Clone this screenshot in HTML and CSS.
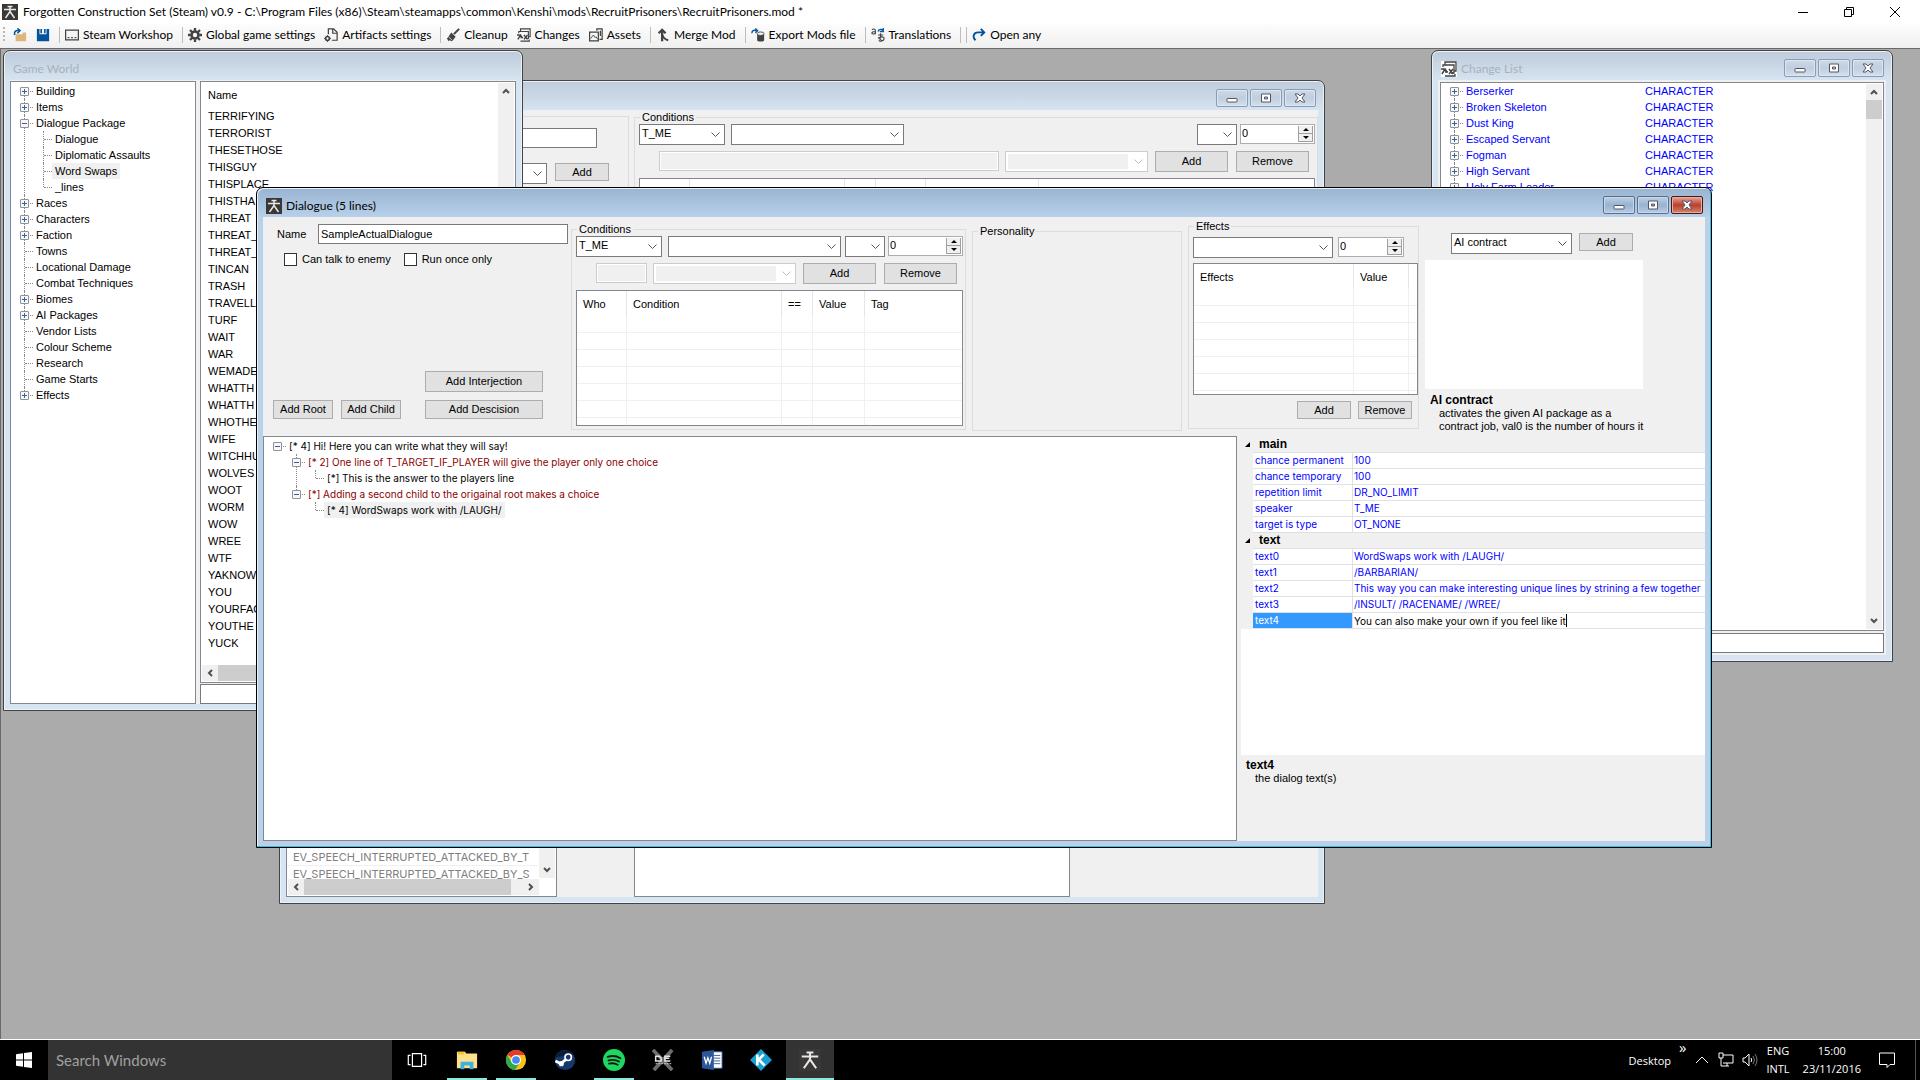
FILE: index.html
```html
<!DOCTYPE html>
<html lang="en">

<head>
    <meta charset="UTF-8">
    <meta name="viewport" content="width=device-width, initial-scale=1.0">
    <title>Forgotten Construction Set</title>
    <link rel="stylesheet" href="styles.css">
</head>

<body>

    <!-- Shared icons -->
    <svg class="defs" aria-hidden="true">
        <symbol id="i-app" viewBox="0 0 16 16">
            <rect width="16" height="16" fill="#3a3836" />
            <path d="M2 5.5h12M5.5 2.6h5M8 2v6M8 7.5L3.5 14M8 7.5l4.5 6.5" stroke="#e8e8e8" stroke-width="1.5" fill="none" />
        </symbol>
        <symbol id="i-open" viewBox="0 0 16 16">
            <path d="M3 7v8h12V5h-4v2z" fill="#dcb67a" />
            <path d="M2 8C1 4 3 2.500 7 3M5 .5L8 3 5 6" stroke="#00539c" stroke-width="1.800" fill="none" />
        </symbol>
        <symbol id="i-save" viewBox="0 0 16 16">
            <path d="M1 1h3v6h8V1h3v14H1z" fill="#00539c" />
            <path d="M5 1h6v5H9V2H7v4H5z" fill="#00539c" />
            <rect x="7" y="1" width="2" height="4" fill="#fff" />
        </symbol>
        <symbol id="i-shop" viewBox="0 0 16 16">
            <path d="M.7 2.500h14.600v11H.7z" stroke="#424242" stroke-width="1.400" fill="#f5f5f5" />
            <path d="M3 11h2M7 11h2M11 11h2" stroke="#424242" stroke-width="1.500" />
        </symbol>
        <symbol id="i-gear" viewBox="0 0 16 16">
            <circle cx="8" cy="8" r="4" stroke="#424242" stroke-width="3" fill="none" />
            <path d="M8 0v3M8 13v3M0 8h3M13 8h3M2.300 2.300l2.200 2.200M11.500 11.500l2.200 2.200M13.700 2.300l-2.200 2.200M4.500 11.500l-2.200 2.200" stroke="#424242" stroke-width="2.600" />
        </symbol>
        <symbol id="i-art" viewBox="0 0 16 16">
            <path d="M5 7V1h6l4 4v9H9M10 1v5h5" stroke="#424242" stroke-width="1.400" fill="none" />
            <circle cx="4" cy="12" r="2.200" stroke="#424242" stroke-width="1.800" fill="none" />
            <path d="M4 8v8M0 12h8" stroke="#424242" stroke-dasharray="1.500 5" />
        </symbol>
        <symbol id="i-broom" viewBox="0 0 16 16">
            <path d="M15 1l-6 6" stroke="#424242" stroke-width="2.400" />
            <path d="M6 5l5 5-4 5-3-1-1 1-2-3 1-1z" fill="#424242" />
            <path d="M3 10l4 4" stroke="#fff" stroke-width=".8" />
        </symbol>
        <symbol id="i-changes" viewBox="0 0 16 16">
            <path d="M4 4V1h11v9h-2M2 6V4h11v8h-3M4 15h10v-2" stroke="#424242" stroke-width="1.300" fill="none" />
            <path d="M1 13l3-5 2 3M4 11h3M8 8l4 5M12 8l-4 5M0 8h3" stroke="#424242" stroke-width="1.500" fill="none" />
        </symbol>
        <symbol id="i-assets" viewBox="0 0 16 16">
            <path d="M.7 4.700h10v10h-10zM9 3V1h6v12h-3M13 3v6" stroke="#424242" stroke-width="1.400" fill="none" />
            <path d="M2 12l3-4 2 3 1-1 2 3" stroke="#424242" fill="none" />
        </symbol>
        <symbol id="i-merge" viewBox="0 0 16 16">
            <path d="M7 15V3M3 6l4-4 4 4" stroke="#424242" stroke-width="2.600" fill="none" />
            <path d="M7 7c1 4 3 6 7 7" stroke="#424242" stroke-width="2.200" fill="none" />
        </symbol>
        <symbol id="i-export" viewBox="0 0 16 16">
            <path d="M1 6c0-3 2-4 5-3M5 .5L7.500 3 5 5.500" stroke="#00539c" stroke-width="1.600" fill="none" />
            <path d="M7 7v7c0 2 8 2 8 0V7z" fill="#424242" />
            <ellipse cx="11" cy="6.500" rx="4" ry="2" fill="#f5f5f5" stroke="#424242" />
        </symbol>
        <symbol id="i-trans" viewBox="0 0 16 16">
            <path d="M1 2c2-1.500 4-1 4 1v4M5 4C2 4 1 5 1 6s3 1.500 4-.5M8 8h6M11 6v6M9 12c0-2 6-3 6 0s-5 4-6 2M8 11l5 4" stroke="#424242" stroke-width="1.300" fill="none" />
            <path d="M8 4c1-3 4-3 6-1M14 0v4h-4" stroke="#00539c" stroke-width="1.500" fill="none" />
        </symbol>
        <symbol id="i-any" viewBox="0 0 16 16">
            <path d="M4 14C0 10 2 5 7 5h7M10 1l4 4-4 4" stroke="#00539c" stroke-width="2.200" fill="none" />
        </symbol>
        <symbol id="i-min" viewBox="0 0 12 12">
            <rect x="1" y="6.500" width="10" height="3.500" rx=".5" fill="#fff" stroke="#535666" />
        </symbol>
        <symbol id="i-max" viewBox="0 0 12 12">
            <path d="M1.500 2h9v8h-9zM4.500 5h3v2h-3z" fill="#fff" stroke="#535666" fill-rule="evenodd" />
        </symbol>
        <symbol id="i-close" viewBox="0 0 12 12">
            <path d="M1 2h3l2 2 2-2h3L8 6l3 4H8L6 8l-2 2H1l3-4z" fill="#fff" stroke="#535666" />
        </symbol>
        <symbol id="i-up" viewBox="0 0 16 16"><path d="M5 10l3-3 3 3" stroke="#505050" stroke-width="2" fill="none" /></symbol>
        <symbol id="i-down" viewBox="0 0 16 16"><path d="M5 6l3 3 3-3" stroke="#505050" stroke-width="2" fill="none" /></symbol>
        <symbol id="i-left" viewBox="0 0 16 16"><path d="M10 5L7 8l3 3" stroke="#505050" stroke-width="2" fill="none" /></symbol>
        <symbol id="i-right" viewBox="0 0 16 16"><path d="M6 5l3 3-3 3" stroke="#505050" stroke-width="2" fill="none" /></symbol>
    </svg>

    <!-- Application title bar -->
    <header class="app-title">
        <svg class="icon16"><use href="#i-app" /></svg>
        <h1>Forgotten Construction Set (Steam) v0.9 - C:\Program Files (x86)\Steam\steamapps\common\Kenshi\mods\RecruitPrisoners\RecruitPrisoners.mod *</h1>
        <div class="app-buttons">
            <button aria-label="Minimize"><svg viewBox="0 0 10 10"><path d="M0 5.500h10" /></svg></button>
            <button aria-label="Restore"><svg viewBox="0 0 10 10"><path d="M.5 2.500h7v7h-7zM2.500 2.500v-2h7v7h-2" /></svg></button>
            <button aria-label="Close"><svg viewBox="0 0 10 10"><path d="M0 0l10 10M10 0L0 10" /></svg></button>
        </div>
    </header>

    <nav class="toolbar">
        <span class="grip"></span>
        <button aria-label="Open"><svg><use href="#i-open" /></svg></button>
        <button aria-label="Save"><svg><use href="#i-save" /></svg></button>
        <span class="sep"></span>
        <button><svg><use href="#i-shop" /></svg>Steam Workshop</button>
        <span class="sep"></span>
        <button><svg><use href="#i-gear" /></svg>Global game settings</button>
        <button><svg><use href="#i-art" /></svg>Artifacts settings</button>
        <span class="sep"></span>
        <button><svg><use href="#i-broom" /></svg>Cleanup</button>
        <button><svg><use href="#i-changes" /></svg>Changes</button>
        <button><svg><use href="#i-assets" /></svg>Assets</button>
        <span class="sep"></span>
        <button><svg><use href="#i-merge" /></svg>Merge Mod</button>
        <span class="sep"></span>
        <button><svg><use href="#i-export" /></svg>Export Mods file</button>
        <span class="sep"></span>
        <button><svg><use href="#i-trans" /></svg>Translations</button>
        <span class="sep"></span>
        <span class="sep"></span>
        <button><svg><use href="#i-any" /></svg>Open any</button>
    </nav>

    <main class="mdi">

        <!-- Dialogue package window, behind the others -->
        <section class="window win-package">
            <div class="win-title">
                <div class="win-buttons">
                    <button aria-label="Minimize"><svg><use href="#i-min" /></svg></button>
                    <button aria-label="Maximize"><svg><use href="#i-max" /></svg></button>
                    <button aria-label="Close"><svg><use href="#i-close" /></svg></button>
                </div>
            </div>
            <div class="win-body package-body">
                <div class="package-top">
                    <fieldset class="package-event">
                        <div class="row"><input type="text" class="package-name" aria-label="Package name"></div>
                        <div class="row event-row">
                            <select class="grow" aria-label="Event"><option></option></select>
                            <button class="btn btn-short">Add</button>
                        </div>
                    </fieldset>
                    <fieldset class="grow">
                        <legend>Conditions</legend>
                        <div class="row">
                            <select class="w-who" aria-label="Who"><option>T_ME</option></select>
                            <select class="w-cond" aria-label="Condition"><option></option></select>
                            <select class="w-op push" aria-label="Comparison"><option></option></select>
                            <span class="spin"><input type="text" value="0" aria-label="Value"><span><button aria-label="Up"></button><button aria-label="Down"></button></span></span>
                        </div>
                        <div class="row row-tag">
                            <input type="text" class="grow" disabled aria-label="Tag value">
                            <select class="w-tag" disabled aria-label="Tag"><option></option></select>
                            <button class="btn btn-wide">Add</button>
                            <button class="btn btn-wide">Remove</button>
                        </div>
                        <div class="listbox package-list"><i></i><i></i><i></i><i></i><i></i></div>
                    </fieldset>
                </div>
                <div class="package-bottom">
                    <div class="listbox events">
                        <div class="events-main">
                            <ul>
                                <li>EV_SPEECH_INTERRUPTED_ATTACKED_BY_T</li>
                                <li>EV_SPEECH_INTERRUPTED_ATTACKED_BY_S</li>
                            </ul>
                            <div class="vscroll"><svg class="end"><use href="#i-down" /></svg></div>
                        </div>
                        <div class="hscroll"><svg><use href="#i-left" /></svg><span class="thumb"></span><svg><use href="#i-right" /></svg></div>
                    </div>
                    <div class="listbox package-lines"></div>
                </div>
            </div>
        </section>

        <!-- Change list -->
        <section class="window win-changes">
            <div class="win-title">
                <svg class="icon16"><use href="#i-changes" /></svg>
                <h2>Change List</h2>
                <div class="win-buttons">
                    <button aria-label="Minimize"><svg><use href="#i-min" /></svg></button>
                    <button aria-label="Maximize"><svg><use href="#i-max" /></svg></button>
                    <button aria-label="Close"><svg><use href="#i-close" /></svg></button>
                </div>
            </div>
            <div class="win-body changes-body">
                <div class="listbox changes-list">
                    <ul class="tree">
                        <li><div class="node"><button class="box plus" aria-label="Expand"></button><span>Berserker</span><span>CHARACTER</span></div></li>
                        <li><div class="node"><button class="box plus" aria-label="Expand"></button><span>Broken Skeleton</span><span>CHARACTER</span></div></li>
                        <li><div class="node"><button class="box plus" aria-label="Expand"></button><span>Dust King</span><span>CHARACTER</span></div></li>
                        <li><div class="node"><button class="box plus" aria-label="Expand"></button><span>Escaped Servant</span><span>CHARACTER</span></div></li>
                        <li><div class="node"><button class="box plus" aria-label="Expand"></button><span>Fogman</span><span>CHARACTER</span></div></li>
                        <li><div class="node"><button class="box plus" aria-label="Expand"></button><span>High Servant</span><span>CHARACTER</span></div></li>
                        <li><div class="node"><button class="box plus" aria-label="Expand"></button><span>Holy Farm Leader</span><span>CHARACTER</span></div></li>
                    </ul>
                    <div class="vscroll"><svg><use href="#i-up" /></svg><span class="thumb"></span><svg class="end"><use href="#i-down" /></svg></div>
                </div>
                <input type="text" aria-label="Filter changes">
            </div>
        </section>

        <!-- Game world browser -->
        <section class="window win-world">
            <div class="win-title"><h2>Game World</h2></div>
            <div class="win-body world-body">
                <div class="listbox world-tree">
                    <ul class="tree">
                        <li><div class="node"><button class="box plus" aria-label="Expand"></button><span>Building</span></div></li>
                        <li><div class="node"><button class="box plus" aria-label="Expand"></button><span>Items</span></div></li>
                        <li>
                            <div class="node"><button class="box" aria-label="Collapse"></button><span>Dialogue Package</span></div>
                            <ul>
                                <li><div class="node"><span>Dialogue</span></div></li>
                                <li><div class="node"><span>Diplomatic Assaults</span></div></li>
                                <li><div class="node"><span class="selected">Word Swaps</span></div></li>
                                <li><div class="node"><span>_lines</span></div></li>
                            </ul>
                        </li>
                        <li><div class="node"><button class="box plus" aria-label="Expand"></button><span>Races</span></div></li>
                        <li><div class="node"><button class="box plus" aria-label="Expand"></button><span>Characters</span></div></li>
                        <li><div class="node"><button class="box plus" aria-label="Expand"></button><span>Faction</span></div></li>
                        <li><div class="node"><span>Towns</span></div></li>
                        <li><div class="node"><span>Locational Damage</span></div></li>
                        <li><div class="node"><span>Combat Techniques</span></div></li>
                        <li><div class="node"><button class="box plus" aria-label="Expand"></button><span>Biomes</span></div></li>
                        <li><div class="node"><button class="box plus" aria-label="Expand"></button><span>AI Packages</span></div></li>
                        <li><div class="node"><span>Vendor Lists</span></div></li>
                        <li><div class="node"><span>Colour Scheme</span></div></li>
                        <li><div class="node"><span>Research</span></div></li>
                        <li><div class="node"><span>Game Starts</span></div></li>
                        <li><div class="node"><button class="box plus" aria-label="Expand"></button><span>Effects</span></div></li>
                    </ul>
                </div>
                <div class="world-items">
                    <div class="listbox world-list">
                        <div class="world-scroll">
                            <table>
                                <thead><tr><th>Name</th></tr></thead>
                                <tbody>
                                    <tr><td>TERRIFYING</td></tr>
                                    <tr><td>TERRORIST</td></tr>
                                    <tr><td>THESETHOSE</td></tr>
                                    <tr><td>THISGUY</td></tr>
                                    <tr><td>THISPLACE</td></tr>
                                    <tr><td>THISTHA</td></tr>
                                    <tr><td>THREAT</td></tr>
                                    <tr><td>THREAT_</td></tr>
                                    <tr><td>THREAT_</td></tr>
                                    <tr><td>TINCAN</td></tr>
                                    <tr><td>TRASH</td></tr>
                                    <tr><td>TRAVELL</td></tr>
                                    <tr><td>TURF</td></tr>
                                    <tr><td>WAIT</td></tr>
                                    <tr><td>WAR</td></tr>
                                    <tr><td>WEMADE</td></tr>
                                    <tr><td>WHATTH</td></tr>
                                    <tr><td>WHATTH</td></tr>
                                    <tr><td>WHOTHE</td></tr>
                                    <tr><td>WIFE</td></tr>
                                    <tr><td>WITCHHU</td></tr>
                                    <tr><td>WOLVES</td></tr>
                                    <tr><td>WOOT</td></tr>
                                    <tr><td>WORM</td></tr>
                                    <tr><td>WOW</td></tr>
                                    <tr><td>WREE</td></tr>
                                    <tr><td>WTF</td></tr>
                                    <tr><td>YAKNOW</td></tr>
                                    <tr><td>YOU</td></tr>
                                    <tr><td>YOURFAC</td></tr>
                                    <tr><td>YOUTHE</td></tr>
                                    <tr><td>YUCK</td></tr>
                                </tbody>
                            </table>
                            <div class="vscroll"><svg><use href="#i-up" /></svg></div>
                        </div>
                        <div class="hscroll"><svg><use href="#i-left" /></svg><span class="thumb"></span></div>
                    </div>
                    <input type="text" aria-label="Filter items">
                </div>
            </div>
        </section>

        <!-- Active dialogue editor -->
        <section class="window active win-dialogue">
            <div class="win-title">
                <svg class="icon16"><use href="#i-app" /></svg>
                <h2>Dialogue (5 lines)</h2>
                <div class="win-buttons">
                    <button aria-label="Minimize"><svg><use href="#i-min" /></svg></button>
                    <button aria-label="Maximize"><svg><use href="#i-max" /></svg></button>
                    <button class="close" aria-label="Close"><svg><use href="#i-close" /></svg></button>
                </div>
            </div>
            <div class="win-body dialogue-body">
                <div class="dialogue-top">
                    <div class="general">
                        <div class="row name-row">
                            <label for="name">Name</label>
                            <input type="text" id="name" class="grow" value="SampleActualDialogue">
                        </div>
                        <div class="row checks">
                            <label><input type="checkbox">Can talk to enemy</label>
                            <label><input type="checkbox">Run once only</label>
                        </div>
                        <div class="line-buttons">
                            <div class="row"><button class="btn btn-line push">Add Interjection</button></div>
                            <div class="row">
                                <button class="btn btn-node">Add Root</button>
                                <button class="btn btn-node">Add Child</button>
                                <button class="btn btn-line push">Add Descision</button>
                            </div>
                        </div>
                    </div>

                    <fieldset class="conditions">
                        <legend>Conditions</legend>
                        <div class="row">
                            <select class="w-who" aria-label="Who"><option>T_ME</option></select>
                            <select class="w-cond" aria-label="Condition"><option></option></select>
                            <select class="w-op" aria-label="Comparison"><option></option></select>
                            <span class="spin"><input type="text" value="0" aria-label="Value"><span><button aria-label="Up"></button><button aria-label="Down"></button></span></span>
                        </div>
                        <div class="row row-tag">
                            <input type="text" class="grow" disabled aria-label="Tag value">
                            <select class="w-tag" disabled aria-label="Tag"><option></option></select>
                            <button class="btn btn-wide">Add</button>
                            <button class="btn btn-wide">Remove</button>
                        </div>
                        <div class="listbox grid-list">
                            <table>
                                <colgroup><col class="c-who"><col class="c-cond"><col class="c-eq"><col class="c-value"><col></colgroup>
                                <thead><tr><th>Who</th><th>Condition</th><th>==</th><th>Value</th><th>Tag</th></tr></thead>
                                <tbody>
                                    <tr><td></td><td></td><td></td><td></td><td></td></tr>
                                    <tr><td></td><td></td><td></td><td></td><td></td></tr>
                                    <tr><td></td><td></td><td></td><td></td><td></td></tr>
                                    <tr><td></td><td></td><td></td><td></td><td></td></tr>
                                    <tr><td></td><td></td><td></td><td></td><td></td></tr>
                                    <tr><td></td><td></td><td></td><td></td><td></td></tr>
                                    <tr><td></td><td></td><td></td><td></td><td></td></tr>
                                </tbody>
                            </table>
                        </div>
                    </fieldset>

                    <fieldset class="personality">
                        <legend>Personality</legend>
                    </fieldset>

                    <fieldset class="effects">
                        <legend>Effects</legend>
                        <div class="row effect-row">
                            <select class="w-effect" aria-label="Effect"><option></option></select>
                            <span class="spin grow"><input type="text" value="0" aria-label="Effect value"><span><button aria-label="Up"></button><button aria-label="Down"></button></span></span>
                        </div>
                        <div class="listbox grid-list">
                            <table>
                                <colgroup><col class="c-effect"><col class="c-evalue"><col></colgroup>
                                <thead><tr><th>Effects</th><th>Value</th><th></th></tr></thead>
                                <tbody>
                                    <tr><td></td><td></td><td></td></tr>
                                    <tr><td></td><td></td><td></td></tr>
                                    <tr><td></td><td></td><td></td></tr>
                                    <tr><td></td><td></td><td></td></tr>
                                    <tr><td></td><td></td><td></td></tr>
                                    <tr><td></td><td></td><td></td></tr>
                                    <tr><td></td><td></td><td></td></tr>
                                </tbody>
                            </table>
                        </div>
                        <div class="row effect-buttons">
                            <button class="btn btn-short">Add</button>
                            <button class="btn btn-short">Remove</button>
                        </div>
                    </fieldset>

                    <div class="ai">
                        <div class="row ai-row">
                            <select class="w-ai" aria-label="AI type"><option>AI contract</option></select>
                            <button class="btn btn-short">Add</button>
                        </div>
                        <div class="ai-list"></div>
                        <h3>AI contract</h3>
                        <p>activates the given AI package as a contract job, val0 is the number of hours it</p>
                    </div>
                </div>

                <div class="dialogue-bottom">
                    <div class="listbox lines">
                        <ul class="tree">
                            <li>
                                <div class="node"><button class="box" aria-label="Collapse"></button><span>[* 4] Hi! Here you can write what they will say!</span></div>
                                <ul>
                                    <li>
                                        <div class="node player"><button class="box" aria-label="Collapse"></button><span>[* 2] One line of T_TARGET_IF_PLAYER will give the player only one choice</span></div>
                                        <ul>
                                            <li><div class="node"><span>[*] This is the answer to the players line</span></div></li>
                                        </ul>
                                    </li>
                                    <li>
                                        <div class="node player"><button class="box" aria-label="Collapse"></button><span>[*] Adding a second child to the origainal root makes a choice</span></div>
                                        <ul>
                                            <li><div class="node"><span class="selected">[* 4] WordSwaps work with /LAUGH/</span></div></li>
                                        </ul>
                                    </li>
                                </ul>
                            </li>
                        </ul>
                    </div>

                    <div class="properties">
                        <div class="props-scroll">
                            <table>
                                <colgroup><col class="c-margin"><col class="c-prop"><col></colgroup>
                                <tr class="group"><td><b class="tri"></b></td><th colspan="2">main</th></tr>
                                <tr><td></td><th>chance permanent</th><td>100</td></tr>
                                <tr><td></td><th>chance temporary</th><td>100</td></tr>
                                <tr><td></td><th>repetition limit</th><td>DR_NO_LIMIT</td></tr>
                                <tr><td></td><th>speaker</th><td>T_ME</td></tr>
                                <tr><td></td><th>target is type</th><td>OT_NONE</td></tr>
                                <tr class="group"><td><b class="tri"></b></td><th colspan="2">text</th></tr>
                                <tr><td></td><th>text0</th><td>WordSwaps work with /LAUGH/</td></tr>
                                <tr><td></td><th>text1</th><td>/BARBARIAN/</td></tr>
                                <tr><td></td><th>text2</th><td>This way you can make interesting unique lines by strining a few together</td></tr>
                                <tr><td></td><th>text3</th><td>/INSULT/ /RACENAME/ /WREE/</td></tr>
                                <tr class="current"><td></td><th><label for="text4">text4</label></th><td><input type="text" id="text4" value="You can also make your own if you feel like it"><span class="caret"></span></td></tr>
                            </table>
                        </div>
                        <div class="help">
                            <h3>text4</h3>
                            <p>the dialog text(s)</p>
                        </div>
                    </div>
                </div>
            </div>
        </section>
    </main>

    <!-- Windows taskbar -->
    <footer class="taskbar">
        <button class="start" aria-label="Start">
            <svg viewBox="0 0 16 16"><path d="M0 2.300L7 1.200v6.300H0zM8 1l8-1v7.500H8zM0 8.500h7v6.300L0 13.700zM8 8.500h8V16l-8-1z" fill="#fff" /></svg>
        </button>
        <input type="text" class="search" placeholder="Search Windows" aria-label="Search Windows">
        <div class="apps">
            <button class="task-view" aria-label="Task view">
                <svg viewBox="0 0 24 24" fill="none" stroke="#fff" stroke-width="1.300"><path d="M7 5h10v14H7zM5 7H2.500v10H5M19 7h2.500v10H19" /></svg>
            </button>
            <button class="open" aria-label="File Explorer">
                <svg viewBox="0 0 24 24"><path d="M1 3h9l1 2h12v16H1z" fill="#ffe08a" /><path d="M2 3h7v3H2z" fill="#f5c32c" /><path d="M5 22v-8h14v8h-4v-4H9v4z" fill="#3cb1e6" /></svg>
            </button>
            <button class="open" aria-label="Chrome">
                <svg viewBox="0 0 24 24"><circle cx="12" cy="12" r="11" fill="#fbc116" /><path d="M12 12L2.500 6.500A11 11 0 0 1 21.500 6.500H12z" fill="#e33b2e" /><path d="M2.500 6.500A11 11 0 0 0 11 23l5-8-9-1z" fill="#2da94f" /><circle cx="12" cy="12" r="5.500" fill="#fff" /><circle cx="12" cy="12" r="4.200" fill="#4587f3" /></svg>
            </button>
            <button aria-label="Steam">
                <svg viewBox="0 0 24 24"><circle cx="12" cy="12" r="11" fill="#16386b" /><path d="M2 9a11 11 0 0 1 19-3z" fill="#0b1c3b" /><path d="M1.500 13l6 3 6-5" stroke="#fff" stroke-width="3" fill="none" /><circle cx="15.500" cy="9" r="3.500" fill="#16386b" stroke="#fff" stroke-width="1.800" /><circle cx="8" cy="16" r="2.800" fill="#fff" /></svg>
            </button>
            <button class="open" aria-label="Spotify">
                <svg viewBox="0 0 24 24"><circle cx="12" cy="12" r="12" fill="#1ed760" /><path d="M5 8.500c5-1.500 10-1 14 1.500M6 12.500c4-1 8-.8 11.500 1.200M6.500 16c3.500-.8 6.500-.6 9.500 1.200" stroke="#0a1a10" stroke-width="2" fill="none" stroke-linecap="round" /></svg>
            </button>
            <button aria-label="DC Universe">
                <svg viewBox="0 0 24 24" fill="none"><path d="M1 1l21 22M22 1L2 23" stroke="#6e6e6e" stroke-width="4" /><path d="M4 8h4l2 2v3H4zM20 8h-6v5h6M14 10h5" stroke="#e4e4e4" stroke-width="1.600" /><path d="M4 16h17" stroke="#cfcfcf" stroke-dasharray="2 1" /></svg>
            </button>
            <button aria-label="Word">
                <svg viewBox="0 0 24 24"><path d="M12 3h11v18H12z" fill="#fff" stroke="#2b579a" /><path d="M14 7h7M14 10h7M14 13h7M14 16h7" stroke="#2b579a" /><path d="M1 3l13-2v22L1 21z" fill="#2b579a" /><path d="M3.500 8.500l2 7 2-6 2 6 2-7" stroke="#fff" stroke-width="1.400" fill="none" /></svg>
            </button>
            <button aria-label="Kodi">
                <svg viewBox="0 0 24 24"><path d="M12 0l12 12-12 12L0 12z" fill="#17a0d4" /><path d="M8 6v12M9 12l6-6M10 12l6 6" stroke="#fff" stroke-width="2.800" fill="none" /></svg>
            </button>
            <button class="open focused" aria-label="Forgotten Construction Set">
                <svg viewBox="0 0 16 16"><use href="#i-app" /></svg>
            </button>
        </div>
        <div class="tray">
            <span class="desktop">Desktop</span>
            <span class="more">»</span>
            <svg viewBox="0 0 16 16" class="chev"><path d="M2 11l6-6 6 6" /></svg>
            <svg viewBox="0 0 16 16"><path d="M5 3h10v8H5M1 1h4v5H1zM3 6v8h8M9 11v3" /></svg>
            <svg viewBox="0 0 16 16"><path d="M1 6h2l4-4v12L3 10H1zM9 6q1.500 2 0 4" /><path d="M11 4q3 4 0 8M13 2q4 6 0 12" stroke="#777" /></svg>
            <span class="two">ENG<br>INTL</span>
            <span class="two">15:00<br>23/11/2016</span>
            <svg viewBox="0 0 16 16" class="notes"><path d="M.5 1h15v11.500H11L8 15.500V12.500H.5z" /></svg>
            <span class="peek"></span>
        </div>
    </footer>

</body>

</html>
```
FILE: styles.css
```css
* {
    box-sizing: border-box;
}

body {
    font-family: "Liberation Sans", Arial, sans-serif;
    font-size: 11px;
    line-height: 13px;
    color: #000;
    background-color: #fff;
    display: flex;
    flex-direction: column;
    height: 100vh;
    margin: 0;
    overflow: hidden;
}

h1,
h2,
h3,
p,
ul {
    margin: 0;
    padding: 0;
    font-size: inherit;
    list-style: none;
}

button,
input,
select {
    font: inherit;
    color: inherit;
    margin: 0;
    padding: 0;
    border-radius: 0;
}

svg {
    display: block;
    flex: none;
}

.defs {
    position: absolute;
    width: 0;
    height: 0;
}

.icon16 {
    width: 16px;
    height: 16px;
}

/* Application title bar */
.app-title {
    display: flex;
    align-items: center;
    flex: none;
    height: 23px;
    padding-left: 2px;
    gap: 5px;
    font-family: Lato, sans-serif;
    font-size: 12px;
}

.app-title h1 {
    flex: 1;
    font-weight: normal;
    white-space: nowrap;
}

.app-buttons {
    display: flex;
    margin-right: 2px;
}

.app-buttons button {
    width: 46px;
    height: 20px;
    border: none;
    background: none;
    display: flex;
    align-items: center;
    justify-content: center;
}

.app-buttons svg {
    width: 10px;
    height: 10px;
    fill: none;
    stroke: #000;
}

/* Toolbar */
.toolbar {
    display: flex;
    align-items: center;
    flex: none;
    height: 25px;
    padding: 0 0 2px 3px;
    background: linear-gradient(#fdfdfd, #f0f0f0);
    font-family: Lato, sans-serif;
    font-size: 12px;
}

.toolbar button {
    display: flex;
    align-items: center;
    gap: 4px;
    padding: 0 5px 0 4px;
    border: none;
    background: none;
    white-space: nowrap;
}

.toolbar svg {
    width: 14px;
    height: 14px;
}

.grip {
    width: 2px;
    height: 15px;
    margin-right: 4px;
    background: repeating-linear-gradient(#b8b8b8 0 2px, transparent 2px 4px);
}

.sep {
    width: 1px;
    height: 16px;
    margin: 0 1px 0 4px;
    background-color: #bdbdbd;
}

/* MDI area */
.mdi {
    position: relative;
    flex: 1;
    background-color: #ababab;
    border-bottom: 1px solid #fff;
    box-shadow: inset 1px 1px #696969;
    overflow: hidden;
}

.window {
    position: absolute;
    display: flex;
    flex-direction: column;
    padding: 0 6px 6px;
    border: 1px solid #434343;
    border-radius: 7px 7px 0 0;
    background: linear-gradient(#bdcbda, #d7e4f2 30px);
    box-shadow: inset 0 0 0 1px #eaf1f8;
}

.window.active {
    border-color: #000;
    background: linear-gradient(#99b4d1, #b9d1ea 30px);
    box-shadow: inset -1px -1px #35c0e0, inset 1px 1px #eaf1f8;
}

.win-title {
    display: flex;
    align-items: center;
    flex: none;
    height: 29px;
    padding: 6px 2px 0 3px;
    gap: 4px;
    font-family: Lato, sans-serif;
    font-size: 12px;
    color: #a9b1b9;
}

.active .win-title {
    color: #000;
}

.win-title h2 {
    font-weight: normal;
}

.win-title .icon16 {
    background-color: #fff;
}

.win-buttons {
    display: flex;
    align-self: flex-start;
    gap: 2px;
    margin: 2px 0 0 auto;
}

.win-buttons button {
    display: flex;
    align-items: center;
    justify-content: center;
    width: 32px;
    height: 18px;
    border: 1px solid #8c9bb5;
    border-radius: 2px;
    background: linear-gradient(#cfdae6, #bfcddd 50%, #d3e0ee);
    box-shadow: inset 0 0 0 1px #dce6f1;
}

.active .win-buttons button {
    border-color: #5a6f8e;
    background: linear-gradient(#bfd0e5, #98b2d0 50%, #b6cde6);
    box-shadow: inset 0 0 0 1px #c8d8ea;
}

.active .win-buttons .close {
    border-color: #4a1612;
    background: linear-gradient(#e9a79c, #b8402c 50%, #d48470);
    box-shadow: inset 0 0 0 1px #e8ada3;
}

.win-buttons svg {
    width: 12px;
    height: 12px;
}

.win-body {
    flex: 1;
    min-height: 0;
    background-color: #f0f0f0;
}

/* Window places on the MDI canvas */
.win-world {
    left: 3px;
    top: 2px;
    width: 520px;
    height: 661px;
}

.win-package {
    left: 279px;
    top: 32px;
    width: 1046px;
    height: 824px;
}

.win-changes {
    left: 1431px;
    top: 2px;
    width: 462px;
    height: 612px;
}

.win-dialogue {
    left: 256px;
    top: 139px;
    width: 1456px;
    height: 661px;
}

/* Controls */
.row {
    display: flex;
    align-items: flex-start;
}

.grow {
    flex: 1;
    min-width: 0;
}

.push {
    margin-left: auto;
}

input[type="text"] {
    height: 20px;
    padding: 0 2px;
    border: 1px solid #7a7a7a;
    background-color: #fff;
}

input[type="text"]:disabled {
    border-color: #ccc;
    background-color: #f0f0f0;
    box-shadow: inset 0 0 0 1px #fff;
}

input[type="checkbox"] {
    appearance: none;
    width: 13px;
    height: 13px;
    border: 1px solid #333;
    background-color: #fff;
}

select {
    appearance: none;
    height: 21px;
    padding: 0 16px 2px 2px;
    border: 1px solid #7a7a7a;
    background: #fff url("data:image/svg+xml,%3Csvg xmlns='http://www.w3.org/2000/svg' viewBox='0 0 9 6'%3E%3Cpath d='M.5 .5l4 4 4-4' fill='none' stroke='%23555'/%3E%3C/svg%3E") no-repeat right 4px center / 9px 6px;
}

select:disabled {
    opacity: 1;
    border-color: #ccc;
    background:
        url("data:image/svg+xml,%3Csvg xmlns='http://www.w3.org/2000/svg' viewBox='0 0 9 6'%3E%3Cpath d='M.5 .5l4 4 4-4' fill='none' stroke='%23bbb'/%3E%3C/svg%3E") no-repeat right 4px center / 9px 6px,
        linear-gradient(#f0f0f0, #f0f0f0) no-repeat 2px 2px / calc(100% - 21px) calc(100% - 4px) #fff;
}

.btn {
    height: 21px;
    border: 1px solid #adadad;
    background-color: #e1e1e1;
    text-align: center;
    white-space: nowrap;
}

.btn-wide {
    width: 73px;
}

.btn-short {
    width: 54px;
    height: 18px;
}

.btn-node {
    width: 60px;
    height: 19px;
    margin-right: 8px;
}

.btn-line {
    width: 118px;
}

.w-who {
    width: 86px;
    margin-right: 6px;
}

.w-cond {
    width: 173px;
    margin-right: 4px;
}

.w-op {
    width: 40px;
    margin-right: 3px;
}

.w-tag {
    width: 143px;
    margin: 0 7px 0 6px;
}

.spin {
    display: flex;
    width: 75px;
    height: 20px;
    padding: 1px;
    border: 1px solid #abadb3;
    background-color: #fff;
}

.spin input[type="text"] {
    flex: 1;
    min-width: 0;
    height: 14px;
    padding: 0;
    border: none;
}

.spin > span {
    display: flex;
    flex-direction: column;
    width: 15px;
}

.spin button {
    flex: 1;
    display: flex;
    align-items: center;
    justify-content: center;
    border: 1px solid #a0a0a0;
    border-width: 0 1px 1px;
    background-color: #f0f0f0;
}

.spin button::before {
    content: "";
    border: 3px solid transparent;
    border-top-width: 0;
    border-bottom-color: #000;
}

.spin button + button::before {
    border-width: 3px 3px 0;
    border-top-color: #000;
}

fieldset {
    margin: 0;
    padding: 0 2px 2px 4px;
    border: 1px solid #dcdcdc;
    min-width: 0;
}

legend {
    margin-left: 1px;
    padding: 0 2px;
    line-height: 14px;
}

.row-tag {
    margin-top: 6px;
    padding: 0 6px 0 20px;
}

.row-tag .btn-wide + .btn-wide {
    margin-left: 8px;
}

.listbox {
    border: 1px solid #828790;
    background-color: #fff;
    overflow: hidden;
}

table {
    border-spacing: 0;
    table-layout: fixed;
    width: 100%;
}

th,
td {
    padding: 0;
    font-weight: normal;
    text-align: left;
    white-space: nowrap;
}

/* Scrollbars */
.vscroll {
    display: flex;
    flex-direction: column;
    flex: none;
    width: 16px;
    margin: 1px;
    background-color: #f0f0f0;
}

.hscroll {
    display: flex;
    flex: none;
    height: 16px;
    margin: 0 1px 1px;
    background-color: #f0f0f0;
}

.vscroll svg,
.hscroll svg {
    width: 16px;
    height: 16px;
}

.vscroll .end {
    margin-top: auto;
}

.thumb {
    background-color: #cdcdcd;
}

/* Trees */
.tree {
    padding-top: 1px;
}

.tree li {
    position: relative;
}

.tree li::before {
    content: "";
    position: absolute;
    left: 13px;
    top: 0;
    height: 100%;
    border-left: 1px dotted #8a8a8a;
}

.tree li:last-child::before {
    height: 8px;
}

.tree > li:first-child::before {
    top: 8px;
}

.tree > li:only-child::before {
    display: none;
}

.tree ul {
    padding-left: 19px;
}

.node {
    display: flex;
    align-items: center;
    height: 16px;
    padding-left: 22px;
    position: relative;
    white-space: nowrap;
}

.node::before {
    content: "";
    position: absolute;
    left: 14px;
    top: 8px;
    width: 8px;
    border-top: 1px dotted #8a8a8a;
}

.node span {
    padding: 0 3px;
    line-height: 16px;
}

.selected {
    background-color: #f0f0f0;
}

/* The box lies over the crossing of the dotted lines */
.box {
    position: absolute;
    left: 9px;
    top: 4px;
    width: 9px;
    height: 9px;
    border: 1px solid #919191;
    border-radius: 1px;
    background: linear-gradient(#3b5fa8, #3b5fa8) center / 5px 1px no-repeat #f7f7f7;
}

.box.plus {
    background:
        linear-gradient(#3b5fa8, #3b5fa8) center / 5px 1px no-repeat,
        linear-gradient(#3b5fa8, #3b5fa8) center / 1px 5px no-repeat #f7f7f7;
}

/* Game world */
.world-body {
    display: flex;
    gap: 4px;
    padding-top: 1px;
}

.world-tree {
    width: 186px;
}

.world-items {
    flex: 1;
    display: flex;
    flex-direction: column;
    gap: 1px;
}

.world-list {
    flex: 1;
    display: flex;
    flex-direction: column;
}

.world-scroll {
    flex: 1;
    display: flex;
    align-items: stretch;
    min-height: 0;
}

.world-scroll table {
    align-self: flex-start;
    flex: 1;
}

.world-list th {
    height: 26px;
    padding-left: 7px;
}

.world-list td {
    height: 17px;
    padding-left: 7px;
}

.world-list .thumb {
    width: 200px;
}

/* Change list */
.changes-body {
    display: flex;
    flex-direction: column;
    gap: 2px;
    padding: 2px;
    color: #00f;
}

.changes-list {
    flex: 1;
    display: flex;
}

.changes-list .tree {
    flex: 1;
    padding-top: 0;
}

.changes-list .node span:nth-of-type(1) {
    width: 179px;
}

.changes-list .thumb {
    height: 19px;
}

/* Dialogue package */
.package-body {
    display: flex;
    flex-direction: column;
    justify-content: space-between;
}

.package-top {
    display: flex;
    align-items: flex-start;
    gap: 5px;
}

.package-event {
    width: 339px;
    height: 200px;
    margin: 6px 0 0 4px;
    padding: 11px 19px 0 4px;
}

.package-name {
    width: 302px;
}

.event-row {
    margin-top: 15px;
    gap: 8px;
}

.package-list {
    display: flex;
    height: 150px;
    margin-top: 6px;
}

.package-list i {
    border-right: 1px solid #e5e5e5;
    width: 50px;
}

.package-list i:nth-child(2) {
    width: 155px;
}

.package-list i:nth-child(3) {
    width: 31px;
}

.package-list i:nth-child(5) {
    width: 113px;
}

.package-bottom {
    display: flex;
    gap: 77px;
}

.events {
    display: flex;
    flex-direction: column;
    width: 271px;
    height: 80px;
    color: #808080;
    font-family: Inter, sans-serif;
}

.events-main {
    flex: 1;
    display: flex;
    min-height: 0;
}

.events ul {
    flex: 1;
    padding-top: 31px;
    overflow: hidden;
}

.events li {
    height: 17px;
    padding-left: 6px;
    border-bottom: 1px solid #f0f0f0;
    line-height: 16px;
    white-space: nowrap;
}

.events .hscroll {
    margin-right: 17px;
}

.events .thumb {
    flex: 1;
    margin-right: 12px;
}

.package-lines {
    width: 436px;
    height: 80px;
}

/* Dialogue editor */
.dialogue-body {
    display: flex;
    flex-direction: column;
}

.dialogue-top {
    display: flex;
    flex: none;
    height: 219px;
}

.general {
    display: flex;
    flex-direction: column;
    width: 308px;
    padding: 7px 3px 17px 10px;
}

.name-row {
    align-items: center;
}

.name-row label {
    width: 45px;
    padding-left: 4px;
}

.checks {
    gap: 13px;
    margin-top: 9px;
    padding-left: 11px;
}

.checks label {
    display: flex;
    align-items: center;
    gap: 5px;
}

.line-buttons {
    display: flex;
    flex-direction: column;
    gap: 8px;
    margin: auto 25px 0 0;
}

.line-buttons .row + .row .btn {
    height: 19px;
}

.conditions,
.personality,
.effects {
    display: flex;
    flex-direction: column;
    margin-right: 6px;
}

.conditions {
    width: 395px;
    margin-top: 5px;
    margin-bottom: 6px;
}

.personality {
    width: 210px;
    margin-top: 7px;
    margin-bottom: 5px;
}

.effects {
    width: 231px;
    margin-top: 2px;
    margin-bottom: 7px;
    padding-right: 0;
}

.grid-list {
    margin-top: 6px;
    height: 136px;
}

.effects .grid-list {
    margin-top: 5px;
    height: 132px;
}

.grid-list th {
    height: 25px;
    padding: 2px 0 0 6px;
    border-right: 1px solid #e5e5e5;
}

.grid-list td {
    height: 17px;
    border-right: 1px solid #f0f0f0;
    border-bottom: 1px solid #f0f0f0;
}

.grid-list th:last-child,
.grid-list td:last-child {
    border-right: none;
}

.c-who {
    width: 50px;
}

.c-cond {
    width: 155px;
}

.c-eq {
    width: 31px;
}

.c-value {
    width: 52px;
}

.c-effect {
    width: 160px;
}

.c-evalue {
    width: 55px;
}

.effect-row {
    margin-top: 4px;
    gap: 5px;
    padding-right: 14px;
}

.w-effect {
    width: 140px;
}

.effect-buttons {
    justify-content: flex-end;
    gap: 7px;
    margin-top: 6px;
    padding-right: 6px;
}

.ai {
    flex: 1;
}

.ai-row {
    gap: 7px;
    padding: 16px 0 0 26px;
}

.w-ai {
    width: 121px;
}

.ai-list {
    width: 218px;
    height: 129px;
    margin: 6px 0 5px;
    background-color: #fff;
}

.ai h3,
.help h3 {
    padding-left: 5px;
    font-size: 12px;
}

.ai p {
    width: 220px;
    padding-left: 14px;
}

.dialogue-bottom {
    flex: 1;
    display: flex;
    gap: 4px;
    min-height: 0;
    font-family: Inter, sans-serif;
    font-size: 10px;
}

.lines {
    flex: 1;
}

.player {
    color: #8b0000;
}

.properties {
    display: flex;
    flex-direction: column;
    width: 464px;
    padding-top: 1px;
    color: #00f;
}

.props-scroll {
    flex: 1;
    background-color: #fff;
}

.c-margin {
    width: 12px;
}

.c-prop {
    width: 100px;
}

.properties th,
.properties td {
    height: 16px;
    border-bottom: 1px solid #e0e0e0;
}

.properties th {
    padding-left: 2px;
    border-right: 1px solid #e0e0e0;
}

.properties td {
    padding-left: 1px;
}

.properties td:first-child {
    padding: 0;
    border-color: #f0f0f0;
    background-color: #f0f0f0;
}

.properties .group th {
    padding-left: 6px;
    border-right: none;
    background-color: #f0f0f0;
    color: #000;
    font-family: "Liberation Sans", Arial, sans-serif;
    font-size: 12px;
    font-weight: bold;
}

.tri {
    display: block;
    margin-left: 4px;
    width: 0;
    border-left: 5px solid transparent;
    border-bottom: 5px solid #000;
}

.properties .current th {
    background-color: #39f;
    color: #fff;
}

.properties .current input {
    field-sizing: content;
    height: 14px;
    padding: 0;
    border: none;
    color: #000;
    vertical-align: middle;
}

.caret {
    display: inline-block;
    width: 1px;
    height: 13px;
    background-color: #000;
    vertical-align: middle;
}

.help {
    height: 86px;
    padding-top: 4px;
    color: #000;
    font-family: "Liberation Sans", Arial, sans-serif;
    font-size: 11px;
}

.help p {
    padding-left: 14px;
}

/* Taskbar */
.taskbar {
    display: flex;
    flex: none;
    height: 40px;
    background-color: #000;
    color: #fff;
    font-family: Lato, sans-serif;
    font-size: 12px;
}

.taskbar button {
    display: flex;
    align-items: center;
    justify-content: center;
    width: 48px;
    border: none;
    background: none;
}

.start svg {
    width: 16px;
    height: 16px;
}

.taskbar .search {
    width: 344px;
    height: 40px;
    padding: 0 8px;
    border: none;
    background-color: #333;
    font-size: 15px;
}

.search::placeholder {
    color: #a0a0a0;
}

.apps {
    display: flex;
    gap: 1px;
}

.apps .task-view {
    width: 50px;
}

.apps svg {
    width: 22px;
    height: 22px;
}

.apps .open {
    background: linear-gradient(#8ce8dc, #8ce8dc) center bottom / 40px 2px no-repeat;
}

.apps .focused {
    background: linear-gradient(#8ce8dc, #8ce8dc) center bottom / 48px 2px no-repeat #333;
}

.tray {
    display: flex;
    align-items: center;
    margin-left: auto;
    gap: 8px;
    font-family: "Open Sans", sans-serif;
    font-size: 11px;
}

.tray svg {
    width: 16px;
    height: 16px;
    fill: none;
    stroke: #fff;
}

.tray .more {
    align-self: flex-start;
    font-size: 15px;
    line-height: 15px;
}

.two {
    line-height: 18px;
    text-align: center;
}

.two + .two {
    margin-left: 5px;
}

.tray .notes {
    margin: 0 12px 0 10px;
}

.peek {
    width: 5px;
    height: 40px;
    border-left: 1px solid #555;
}
```
